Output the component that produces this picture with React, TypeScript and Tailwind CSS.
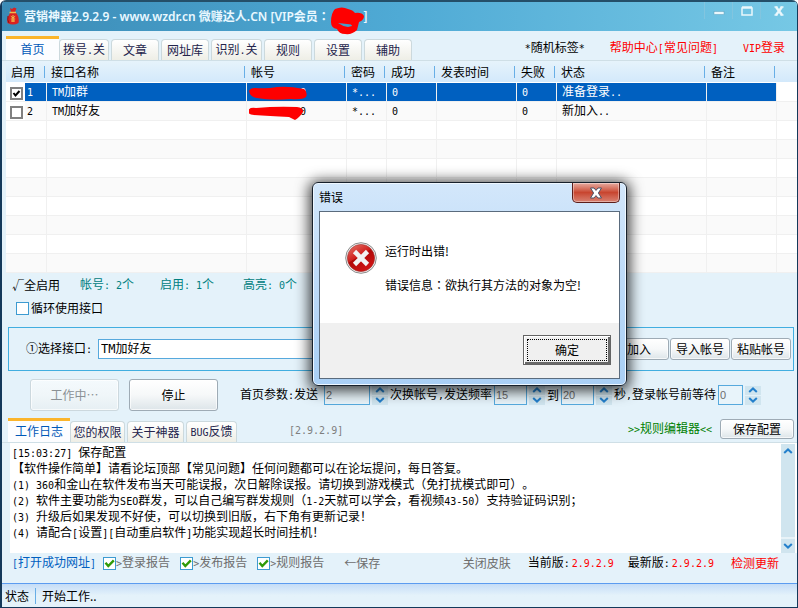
import { useState, type ReactNode } from "react";

type TabItem = { label: string; width: string };

type AccountRow = {
  name: string;
  account: string;
  password: string;
  success: string;
  time: string;
  failed: string;
  status: string;
  note: string;
};

const mainTabs: TabItem[] = [
  { label: "首页", width: "w-[53px]" },
  { label: "拨号.关", width: "w-[50px]" },
  { label: "文章", width: "w-12" },
  { label: "网址库", width: "w-12" },
  { label: "识别.关", width: "w-[51px]" },
  { label: "规则", width: "w-12" },
  { label: "设置", width: "w-12" },
  { label: "辅助", width: "w-12" },
];

const logTabs: TabItem[] = [
  { label: "工作日志", width: "w-[62px]" },
  { label: "您的权限", width: "w-[55px]" },
  { label: "关于神器", width: "w-[57px]" },
  { label: "BUG反馈", width: "w-[51px]" },
];

const columns = [
  { label: "启用", width: "w-10" },
  { label: "接口名称", width: "w-[200px]" },
  { label: "帐号", width: "w-[100px]" },
  { label: "密码", width: "w-10" },
  { label: "成功", width: "w-[50px]" },
  { label: "发表时间", width: "w-20" },
  { label: "失败", width: "w-10" },
  { label: "状态", width: "w-[150px]" },
  { label: "备注", width: "w-[70px]" },
];

const rows: AccountRow[] = [
  { name: "TM加群", account: "0", password: "*...", success: "0", time: "", failed: "0", status: "准备登录..", note: "" },
  { name: "TM加好友", account: "0", password: "*...", success: "0", time: "", failed: "0", status: "新加入..", note: "" },
];

const EMPTY_ROWS = 8;

const logLines = [
  "[15:03:27] 保存配置",
  "【软件操作简单】请看论坛顶部【常见问题】任何问题都可以在论坛提问，每日答复。",
  "(1) 360和金山在软件发布当天可能误报，次日解除误报。请切换到游戏模式（免打扰模式即可）。",
  "(2) 软件主要功能为SEO群发，可以自己编写群发规则（1-2天就可以学会，看视频43-50）支持验证码识别；",
  "(3) 升级后如果发现不好使，可以切换到旧版，右下角有更新记录！",
  "(4) 请配合[设置][自动重启软件]功能实现超长时间挂机！",
];

// Latin runs are set in a half-width mono face so two of them fill one hanzi cell
function Txt({ children }: { children: string }) {
  return (
    <span className="whitespace-pre">
      {children.split(/([\x20-\x7e]+)/).map((part, index) =>
        index % 2 === 1 ? (
          <span key={index} className="font-['DejaVu_Sans_Mono',monospace] text-[10px]">
            {part}
          </span>
        ) : (
          part
        ),
      )}
    </span>
  );
}

// the TC face centres the full-width colon in its cell
function Colon() {
  return <span className="font-['Noto_Sans_CJK_TC',sans-serif]">：</span>;
}

function Tabs({ items, label, active, onChange }: { items: TabItem[]; label: string; active: number; onChange: (index: number) => void }) {
  return (
    <div role="tablist" aria-label={label} className="flex items-end">
      {items.map((item, index) => (
        <button
          key={item.label}
          type="button"
          role="tab"
          aria-selected={active === index}
          onClick={() => onChange(index)}
          className={`${item.width} flex shrink-0 items-center justify-center whitespace-nowrap ${
            active === index
              ? "h-6 border-t-[3px] border-t-[#fbb52c] bg-[#fcfdff] pb-px text-[#0058b8]"
              : "mr-0.5 h-[21px] rounded-t-sm border border-b-0 border-[#ccd9dd] bg-linear-to-b from-white to-[#eeeee6] text-[#24244c]"
          }`}
        >
          <Txt>{item.label}</Txt>
        </button>
      ))}
    </div>
  );
}

function PushButton({ children, className, disabled }: { children: string; className: string; disabled?: boolean }) {
  return (
    <button
      type="button"
      disabled={disabled}
      className={`shrink-0 rounded-[3px] border border-[#9eabb5] bg-linear-to-b from-white via-[#f6f8f9] to-[#dde5e9] text-black shadow-[inset_0_0_0_1px_#ffffffb0] disabled:border-[#ccd8de] disabled:from-[#f4fafd] disabled:via-[#f0f6f9] disabled:to-[#e6eff3] disabled:text-[#8b9195] ${className}`}
    >
      {children}
    </button>
  );
}

function GridCheck({ label, defaultChecked }: { label: string; defaultChecked?: boolean }) {
  return (
    <span className="relative block h-[13px] w-[13px]">
      <input
        type="checkbox"
        aria-label={label}
        defaultChecked={defaultChecked}
        className="peer block h-[13px] w-[13px] appearance-none border-2 border-[#808080] bg-white"
      />
      <svg viewBox="0 0 13 13" className="pointer-events-none absolute inset-0 hidden peer-checked:block" fill="none" stroke="#000" strokeWidth="2">
        <path d="M3.5 6 L5.5 8.5 L9.5 4" />
      </svg>
    </span>
  );
}

function SkinCheck({ children, defaultChecked, className }: { children: string; defaultChecked?: boolean; className: string }) {
  return (
    <label className={`flex shrink-0 items-center ${className}`}>
      <span className="relative block h-[13px] w-[13px] shrink-0">
        <input
          type="checkbox"
          defaultChecked={defaultChecked}
          className="peer block h-[13px] w-[13px] appearance-none border border-[#3d9bd1] bg-white"
        />
        <svg viewBox="0 0 13 13" className="pointer-events-none absolute inset-0 hidden peer-checked:block" fill="none" stroke="#2f9a08" strokeWidth="2.4">
          <path d="M2.5 5.8 L5.3 9 L10.8 3.4" />
        </svg>
      </span>
      <Txt>{children}</Txt>
    </label>
  );
}

function Chevron({ down }: { down?: boolean }) {
  return (
    <svg viewBox="0 0 10 6" className="h-1.5 w-2.5" fill="none" stroke="#2480cc" strokeWidth="2">
      <path d={down ? "M1.2 1 L5 4.6 L8.8 1" : "M1.2 5 L5 1.4 L8.8 5"} />
    </svg>
  );
}

function NumberBox({ label, initial, width }: { label: string; initial: number; width: string }) {
  const [value, setValue] = useState(initial);

  return (
    <span className="flex shrink-0 items-center gap-0.5">
      <input
        aria-label={label}
        value={value}
        onChange={(event) => setValue(Number(event.target.value) || 0)}
        className={`h-5 border border-[#56a9dd] bg-[#e8f4fa] px-px font-['Liberation_Sans',sans-serif] text-[11px] text-[#6d6d6d] ${width}`}
      />
      <span className="flex w-4 flex-col gap-px">
        <button type="button" aria-label={`${label}增加`} onClick={() => setValue(value + 1)} className="flex h-[9px] items-center justify-center bg-[#d0e5ef]">
          <Chevron />
        </button>
        <button type="button" aria-label={`${label}减少`} onClick={() => setValue(value - 1)} className="flex h-[9px] items-center justify-center bg-[#d0e5ef]">
          <Chevron down />
        </button>
      </span>
    </span>
  );
}

function TitleBar() {
  return (
    <header className="flex h-[31px] shrink-0 items-start justify-between border-t-2 border-t-[#244f69] bg-linear-to-r from-[#3b8bb6] via-[#4faad5] to-[#76c8e5]">
      <div className="flex h-7 items-center pl-1 text-[12px] font-semibold text-[#e9f8ff]">
        <svg viewBox="0 0 14 18" className="mr-1 h-[18px] w-3.5">
          <path d="M4 1 L6 2 L8 0.5 L10.5 1.5 L9 5 L11 7 Q13.5 11 12.5 16 Q7 19 1.5 16 Q0.5 11 3.5 7 L5 5 Z" fill="#d92220" />
          <path d="M3.5 5.5 H10" stroke="#eac04f" strokeWidth="1.6" />
          <path d="M7 8 V15 M4.8 9.2 L7 11 L9.2 9.2 M4.8 12 H9.2 M5 14 H9" stroke="#f1c54c" fill="none" />
          <path d="M2 9 Q1 13 3 16" stroke="#8d1017" fill="none" />
        </svg>
        <h1 className="whitespace-pre font-['Noto_Sans','Noto_Sans_CJK_SC',sans-serif]">
          营销神器2.9.2.9 - www.wzdr.cn 微赚达人.CN [VIP会员<Colon />
        </h1>
        <span className="relative flex w-9 justify-end">
          <svg viewBox="0 0 36 28" className="absolute -top-px left-0 h-7 w-9" fill="#fe0000">
            <path d="M5 2 Q12 -1 18 2 Q23 3 25 6 Q32 5 34 9 Q34 13 29 15 L27 23 Q22 28 15 27 Q9 27 7 22 Q1 21 1 15 Q1 6 5 2 Z" />
            <path d="M8 16 L17 17 Q22 17 22 19 L18 20 Q12 19 8 16 Z" fill="#459fcb" />
          </svg>
          <span className="-mr-0.5">]</span>
        </span>
      </div>
      <div className="flex">
        <button type="button" aria-label="最小化" className="flex h-[17px] w-7 items-center justify-center border-l border-[#82c5df] pt-1">
          <svg viewBox="0 0 12 4" className="h-1 w-3"><rect x="1" y="0.5" width="10" height="3" fill="#eaf7fc" stroke="#5d9fbd" strokeWidth="0.5" /></svg>
        </button>
        <button type="button" aria-label="最大化" className="flex h-[17px] w-7 items-center justify-center border-l border-[#82c5df]">
          <svg viewBox="0 0 12 10" className="h-2.5 w-3" fill="none" stroke="#eaf7fc"><path d="M1 2 H11 V9 H1 Z M1 1 H11" strokeWidth="1.5" /></svg>
        </button>
        <button type="button" aria-label="关闭" className="flex h-[17px] w-[37px] items-center justify-center border-l border-[#82c5df]">
          <svg viewBox="0 0 12 10" className="h-2.5 w-3" stroke="#eaf7fc" strokeWidth="2.4"><path d="M3 1 L9 9 M9 1 L3 9" /><path d="M1.5 1 H4.5 M7.5 1 H10.5 M1.5 9 H4.5 M7.5 9 H10.5" strokeWidth="1.4" /></svg>
        </button>
      </div>
    </header>
  );
}

function Scribble({ first }: { first: boolean }) {
  return (
    <svg viewBox="0 0 60 16" className="pointer-events-none absolute top-0.5 left-0.5 h-4 w-[60px]" fill="#fe0000">
      {first ? (
        <path d="M0 6 Q1 3 6 3 Q18 4 28 2 Q40 1 55 4 Q59 7 57 12 Q53 15 42 14 Q22 16 8 13 Q1 12 0 6 Z" />
      ) : (
        <path d="M-1 7 Q0 3 7 4 Q28 2 48 3 Q55 4 54 8 Q50 14 46 16 L40 13 Q20 12 5 11 Q-1 11 -1 7 Z" />
      )}
    </svg>
  );
}

function Cell({ children, selected }: { children?: ReactNode; selected?: boolean }) {
  return (
    <td className={`relative overflow-visible border-b border-l border-b-[#f0f0f0] border-l-[#f0f0f0] py-0 pr-0 pl-[5px] ${selected ? "bg-[#0060c0]" : ""}`}>
      {children}
    </td>
  );
}

function AccountTable() {
  return (
    <table className="w-full table-fixed border-separate border-spacing-0 bg-white text-left whitespace-nowrap">
      <thead>
        <tr className="h-[22px]">
          {columns.map((column) => (
            <th key={column.label} className={`${column.width} border-b border-white bg-linear-to-b from-[#e6f3fb] to-[#d3e9fb] p-0 font-normal`}>
              <div className="mr-px flex h-3 items-center justify-between border-r border-[#67aee6] pl-[5px]">{column.label}</div>
            </th>
          ))}
          <th className="border-b border-white bg-linear-to-b from-[#e6f3fb] to-[#d3e9fb] p-0" />
        </tr>
      </thead>
      <tbody>
        {rows.map((row, index) => {
          const selected = index === 0;
          return (
            <tr key={row.name} className={`h-[19px] leading-4 ${selected ? "text-white" : "bg-[#fafafa]"}`}>
              <td className="border-b border-[#f0f0f0] p-0">
                <div className="flex h-[18px]">
                  <span className="w-[19px] bg-white pt-1 pl-1">
                    <GridCheck label={`启用 ${row.name}`} defaultChecked={selected} />
                  </span>
                  <span className={`flex-1 pl-0.5 ${selected ? "bg-[#0060c0]" : ""}`}>
                    <Txt>{String(index + 1)}</Txt>
                  </span>
                </div>
              </td>
              <Cell selected={selected}><Txt>{row.name}</Txt></Cell>
              <Cell selected={selected}>
                <span className="flex w-[54px] justify-end"><Txt>{row.account}</Txt></span>
                <Scribble first={selected} />
              </Cell>
              <Cell selected={selected}><Txt>{row.password}</Txt></Cell>
              <Cell selected={selected}><Txt>{row.success}</Txt></Cell>
              <Cell selected={selected}><Txt>{row.time}</Txt></Cell>
              <Cell selected={selected}><Txt>{row.failed}</Txt></Cell>
              <Cell selected={selected}><Txt>{row.status}</Txt></Cell>
              <Cell selected={selected}><Txt>{row.note}</Txt></Cell>
              <Cell />
            </tr>
          );
        })}
        {Array.from({ length: EMPTY_ROWS }, (_, index) => (
          <tr key={index} className="h-[19px] even:bg-[#fafafa]">
            <td className="border-b border-[#f0f0f0] p-0" />
            {columns.map((column) => (
              <Cell key={column.label} />
            ))}
          </tr>
        ))}
      </tbody>
    </table>
  );
}

function ErrorDialog({ onClose }: { onClose: () => void }) {
  return (
    <div
      role="alertdialog"
      aria-labelledby="error-title"
      aria-describedby="error-text"
      className="absolute top-[182px] left-[310px] w-[315px] rounded-md border border-[#17202b] bg-linear-to-b from-[#d3e7fb] via-[#bcdaf8] to-[#a9cff5] px-1.5 pb-1.5 font-['Noto_Sans_CJK_SC',sans-serif] text-black shadow-[inset_0_0_0_1px_#eef7ff,0_2px_14px_3px_rgba(0,0,0,0.75)]"
    >
      <div className="flex h-7 items-start justify-between">
        <h2 id="error-title" className="pt-1.5 text-[12px] leading-4">错误</h2>
        <button
          type="button"
          aria-label="关闭"
          onClick={onClose}
          className="flex h-5 w-12 items-center justify-center rounded-b-[5px] border border-t-0 border-[#5c1e1b] bg-linear-to-b from-[#e5aaa0] via-[#c8452f] to-[#d88071] shadow-[inset_0_0_0_1px_#ffffff60]"
        >
          <svg viewBox="0 0 14 12" className="h-3 w-3.5">
            <path d="M1.5 1 H5 L7 3.4 L9 1 H12.5 L9.4 6 L12.5 11 H9 L7 8.6 L5 11 H1.5 L4.6 6 Z" fill="#fff" stroke="#4c5267" strokeWidth="1" />
          </svg>
        </button>
      </div>
      <div className="border border-[#5a6b7d] bg-[#f0f0f0]">
        <div className="flex h-[111px] gap-2 bg-white pt-[30px] pl-[25px]">
          <svg viewBox="0 0 32 32" className="h-8 w-8 shrink-0">
            <defs>
              <linearGradient id="disc" x1="0" y1="0" x2="0.6" y2="1">
                <stop offset="0" stopColor="#e87a70" />
                <stop offset="0.5" stopColor="#cf1f1c" />
                <stop offset="0.52" stopColor="#b00808" />
                <stop offset="1" stopColor="#d01414" />
              </linearGradient>
            </defs>
            <circle cx="16" cy="16" r="15.3" fill="#f3f3f3" stroke="#8a8a8a" />
            <circle cx="16" cy="16" r="13.6" fill="url(#disc)" stroke="#9b2b28" strokeWidth="0.6" />
            <path d="M9.5 9.5 L22.5 22.5 M22.5 9.5 L9.5 22.5" stroke="#f2f2f2" strokeWidth="4.6" />
          </svg>
          <div id="error-text" className="text-[12px] leading-[17px] whitespace-nowrap">
            <p className="mb-[17px]">运行时出错!</p>
            <p>错误信息<Colon />欲执行其方法的对象为空!</p>
          </div>
        </div>
        <div className="flex h-[55px] items-start justify-end pt-3 pr-2">
          <button type="button" onClick={onClose} className="h-[30px] w-[88px] border border-[#646464] bg-[#f0f0f0] p-[3px] text-[12px] shadow-[inset_1px_1px_0_#fff,inset_-2px_-2px_0_#696969]">
            <span className="flex h-full items-center justify-center border border-dotted border-black">确定</span>
          </button>
        </div>
      </div>
    </div>
  );
}

export default function App() {
  const [mainTab, setMainTab] = useState(0);
  const [logTab, setLogTab] = useState(0);
  const [dialogOpen, setDialogOpen] = useState(true);

  return (
    <div className="relative flex min-h-screen flex-col overflow-hidden rounded-t-md border-r border-b border-l-2 border-r-[#14395a] border-b-[#14395a] border-l-[#14395a] bg-[#e4f2fa] font-['Noto_Sans_CJK_SC',sans-serif] text-[12px] leading-4 text-black [text-spacing-trim:space-all]">
      <TitleBar />

      <nav className="flex h-[30px] shrink-0 items-end justify-between border-b border-[#cfdfe6] pl-1">
        <Tabs items={mainTabs} label="功能" active={mainTab} onChange={setMainTab} />
        <div className="flex h-full items-center gap-[25px] pt-1 pr-3 whitespace-nowrap">
          <span><Txt>*随机标签*</Txt></span>
          <a href="#help" className="text-[#ff0000]"><Txt>帮助中心[常见问题]</Txt></a>
          <a href="#vip" className="text-[#ff0000]"><Txt>VIP登录</Txt></a>
        </div>
      </nav>

      <main className="flex flex-1 flex-col">
        <div className="pl-1">
          <AccountTable />
        </div>

        <div className="flex h-[23px] items-center pl-2.5 text-[#008080]">
          <button type="button" className="mr-5 text-black">√全启用</button>
          <span className="w-20"><Txt>帐号: 2个</Txt></span>
          <span className="w-[83px]"><Txt>启用: 1个</Txt></span>
          <span><Txt>高亮: 0个</Txt></span>
        </div>
        <div className="flex h-6 items-center pl-3.5">
          <SkinCheck className="gap-0.5">循环使用接口</SkinCheck>
        </div>

        <section className="mt-[7px] mr-[3px] ml-1.5 flex h-11 items-center border border-[#41aee0] pr-0.5 pl-[17px]">
          <label htmlFor="interface" className="w-[72px] shrink-0"><Txt>①选择接口:</Txt></label>
          <select
            id="interface"
            className="mr-0.5 h-5 min-w-0 flex-1 appearance-none border border-[#56a9dd] bg-white px-0.5 font-['DejaVu_Sans_Mono','Noto_Sans_CJK_SC',monospace] leading-4"
            defaultValue="TM加好友"
          >
            <option>TM加群</option>
            <option>TM加好友</option>
          </select>
          <div className="flex gap-px">
            <PushButton className="h-[22px] w-[60px]">加入</PushButton>
            <PushButton className="h-[22px] w-[60px]">导入帐号</PushButton>
            <PushButton className="h-[22px] w-[60px]">粘贴帐号</PushButton>
          </div>
        </section>

        <section className="mt-2 flex h-8 items-center pl-7 whitespace-nowrap">
          <PushButton className="mr-2.5 h-8 w-[89px]" disabled>工作中…</PushButton>
          <PushButton className="mr-[22px] h-8 w-[89px]">停止</PushButton>
          <span className="w-[84px]"><Txt>首页参数:发送</Txt></span>
          <NumberBox label="发送" initial={2} width="w-[46px]" />
          <span className="ml-0.5 w-[104px]"><Txt>次换帐号,发送频率</Txt></span>
          <NumberBox label="最短间隔" initial={15} width="w-[33px]" />
          <span className="mx-0.5 w-3">到</span>
          <NumberBox label="最长间隔" initial={20} width="w-[33px]" />
          <span className="mx-0.5 w-[102px]"><Txt>秒,登录帐号前等待</Txt></span>
          <NumberBox label="等待" initial={0} width="w-[25px]" />
        </section>

        <section className="mt-2 flex flex-1 flex-col">
          <div className="flex h-6 shrink-0 items-end border-b border-[#cfdfe6] pl-1.5">
            <Tabs items={logTabs} label="日志" active={logTab} onChange={setLogTab} />
            <div className="flex h-full flex-1 items-start justify-between pr-[3px] pl-[50px]">
              <span className="pt-0.5 text-[#7f7f7f]"><Txt>[2.9.2.9]</Txt></span>
              <div className="flex items-center gap-2">
                <a href="#editor" className="text-[#008000]"><Txt>{">>规则编辑器<<"}</Txt></a>
                <PushButton className="h-5 w-[74px]">保存配置</PushButton>
              </div>
            </div>
          </div>
          <div className="ml-2 flex flex-1 bg-white">
            <div role="log" className="flex-1 pt-px pl-0.5 whitespace-nowrap">
              {logLines.map((line) => (
                <p key={line} className="h-4">
                  <Txt>{line}</Txt>
                </p>
              ))}
            </div>
            <div className="mt-px mr-0.5 flex w-3.5 flex-col justify-between bg-[#d0e5ef]">
              <button type="button" aria-label="向上滚动" className="flex h-3.5 items-center justify-center"><Chevron /></button>
              <button type="button" aria-label="向下滚动" className="flex h-4 items-center justify-center border-t-2 border-[#e8f3f8]"><Chevron down /></button>
            </div>
          </div>
        </section>

        <div className="flex h-[30px] shrink-0 items-start justify-between pt-px pr-[18px] pl-2.5 whitespace-nowrap text-[#6d6d6d]">
          <div className="flex items-center">
            <a href="#opened" className="mr-[7px] text-[#0060c0]"><Txt>[打开成功网址]</Txt></a>
            <SkinCheck className="mr-2.5" defaultChecked>{">登录报告"}</SkinCheck>
            <SkinCheck className="mr-2.5" defaultChecked>{">发布报告"}</SkinCheck>
            <SkinCheck className="mr-5" defaultChecked>{">规则报告"}</SkinCheck>
            <button type="button">←保存</button>
          </div>
          <div className="flex items-center text-black">
            <button type="button" className="mr-[17px] text-[#6d6d6d]">关闭皮肤</button>
            <span className="w-11"><Txt>当前版:</Txt></span>
            <span className="mr-3.5 text-[#ff0000]"><Txt>2.9.2.9</Txt></span>
            <span className="w-11"><Txt>最新版:</Txt></span>
            <span className="mr-[17px] text-[#ff0000]"><Txt>2.9.2.9</Txt></span>
            <a href="#update" className="text-[#ff0000]">检测更新</a>
          </div>
        </div>
      </main>

      <footer className="flex h-6 shrink-0 items-center border-t border-[#5b9cf0] bg-linear-to-b from-[#c5ddf7] via-[#e4f2fa] to-[#e4f2fa] pl-[3px]">
        <span className="mr-1.5 border-r border-[#67aee6] pr-1.5">状态</span>
        <span>开始工作..</span>
      </footer>

      {dialogOpen && <ErrorDialog onClose={() => setDialogOpen(false)} />}
    </div>
  );
}
